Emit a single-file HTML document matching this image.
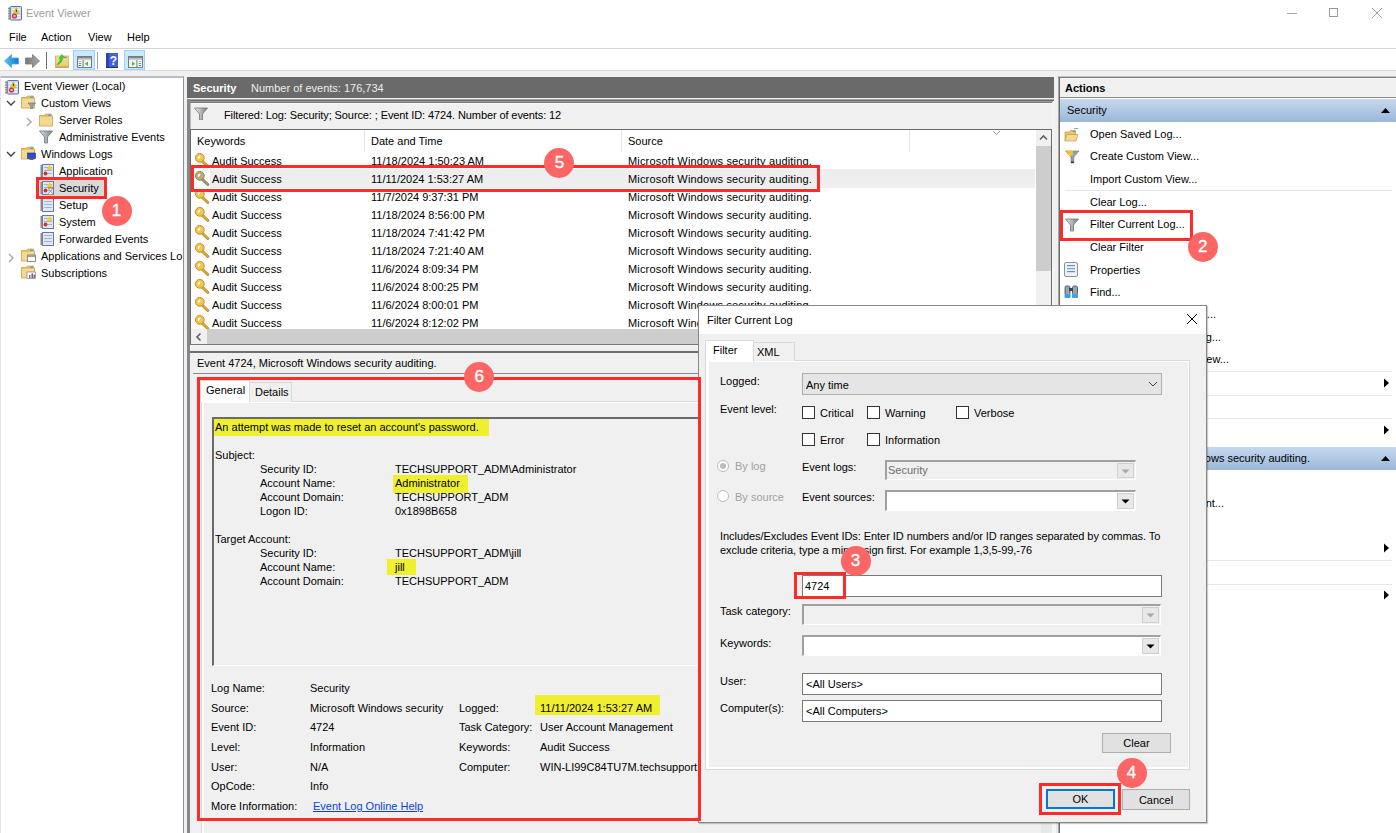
<!DOCTYPE html><html><head><meta charset="utf-8"><title>Event Viewer</title><style>*{margin:0;padding:0}
html,body{width:1396px;height:833px;overflow:hidden;background:#f0f0f0}
body{position:relative;font-family:"Liberation Sans",sans-serif;font-size:11px;color:#000}
.t{position:absolute;white-space:nowrap;line-height:13px;font-size:11px}
.r{position:absolute;display:block}
</style></head><body>
<div class="r" style="left:0px;top:0px;width:1396px;height:833px;background:#f0f0f0"></div>
<div class="r" style="left:0px;top:0px;width:1396px;height:48px;background:#fff"></div>
<svg class="r" style="left:8px;top:6px;" width="14" height="15" viewBox="0 0 14 15"><rect x="2.5" y="0.5" width="11" height="13.5" rx="0.8" fill="#cddcf0" stroke="#5a6fae" stroke-width="1"/><rect x="0.5" y="1" width="2" height="13" fill="#b0b0b0"/><path d="M0 2.5 H2.5 M0 5 H2.5 M0 7.5 H2.5 M0 10 H2.5 M0 12.5 H2.5" stroke="#666" stroke-width="0.6"/><line x1="4" y1="3.5" x2="12.5" y2="3.5" stroke="#f4f7fc"/><line x1="4" y1="6.5" x2="12.5" y2="6.5" stroke="#f4f7fc"/><line x1="4" y1="9.5" x2="12.5" y2="9.5" stroke="#f4f7fc"/><line x1="4" y1="12" x2="12.5" y2="12" stroke="#f4f7fc"/><path d="M8.3 1.8 L11.5 7.5 L5.1 7.5 Z" fill="#f0d21c" stroke="#c9a600" stroke-width="0.5"/><rect x="7.9" y="3.6" width="0.9" height="2.6" fill="#222"/><circle cx="6.5" cy="10" r="2.6" fill="#d8353a"/><path d="M5.5 9 L7.5 11 M7.5 9 L5.5 11" stroke="#fff" stroke-width="0.8"/></svg>
<div class="t" style="left:26px;top:7px;color:#9c9c9c;">Event Viewer</div>
<div class="r" style="left:1287px;top:13px;width:10px;height:1px;background:#a8a8a8"></div>
<div class="r" style="left:1329px;top:8px;width:9px;height:9px;border:1px solid #9a9a9a;box-sizing:border-box"></div>
<svg class="r" style="left:1371px;top:7px;" width="12" height="12" viewBox="0 0 12 12"><path d="M1 1 L11 11 M11 1 L1 11" stroke="#a0a0a0" stroke-width="1"/></svg>
<div class="t" style="left:9px;top:31px;">File</div>
<div class="t" style="left:41px;top:31px;">Action</div>
<div class="t" style="left:88px;top:31px;">View</div>
<div class="t" style="left:127px;top:31px;">Help</div>
<div class="r" style="left:0px;top:48px;width:1396px;height:1px;background:#d5d5d5"></div>
<div class="r" style="left:0px;top:49px;width:1396px;height:21px;background:#fff"></div>
<div class="r" style="left:0px;top:70px;width:1396px;height:1px;background:#dcdcdc"></div>
<svg class="r" style="left:3px;top:53px;" width="17" height="16" viewBox="0 0 17 16"><defs><linearGradient id="gb" x1="0" y1="0" x2="1" y2="0"><stop offset="0" stop-color="#5cc3f7"/><stop offset="1" stop-color="#0a79d6"/></linearGradient></defs><path d="M1.5 8 L8.5 1.5 L8.5 5 L15.5 5 L15.5 11 L8.5 11 L8.5 14.5 Z" fill="url(#gb)" stroke="#4aa8e8" stroke-width="0.8"/></svg>
<svg class="r" style="left:24px;top:53px;" width="17" height="16" viewBox="0 0 17 16"><defs><linearGradient id="gg" x1="0" y1="0" x2="1" y2="0"><stop offset="0" stop-color="#7a7a7a"/><stop offset="1" stop-color="#a8a8a8"/></linearGradient></defs><path d="M15.5 8 L8.5 1.5 L8.5 5 L1.5 5 L1.5 11 L8.5 11 L8.5 14.5 Z" fill="url(#gg)" stroke="#777" stroke-width="0.8"/></svg>
<div class="r" style="left:46px;top:52px;width:1px;height:17px;background:#6a6a6a"></div>
<svg class="r" style="left:55px;top:54px;" width="14" height="14" viewBox="0 0 14 14"><defs><linearGradient id="fy" x1="0" y1="0" x2="0" y2="1"><stop offset="0" stop-color="#f6dc8e"/><stop offset="1" stop-color="#e9c870"/></linearGradient></defs><rect x="0.5" y="2" width="13" height="11.5" fill="url(#fy)" stroke="#d2b060" stroke-width="0.8"/><rect x="0.5" y="12.5" width="13" height="1" fill="#b89848"/><ellipse cx="10.5" cy="3.3" rx="1.6" ry="0.9" fill="#5a9ee0"/><path d="M2 10.5 C3.5 9 5 7 5.5 4.5 L4 4.5 L6.8 0.5 L9.5 3.5 L7.8 3.8 C7.5 7 5.5 9.5 2.5 11 Z" fill="#3ecf3a" stroke="#2aa826" stroke-width="0.5"/></svg>
<div class="r" style="left:73px;top:50px;width:22px;height:20px;background:#cce8ff;border:1px solid #99d1ff;box-sizing:border-box"></div>
<svg class="r" style="left:77px;top:56px;" width="15" height="12" viewBox="0 0 15 12"><rect x="0.5" y="0.5" width="14" height="11" fill="#f4f4f4" stroke="#7a7a7a"/><rect x="1" y="1" width="13" height="1.6" fill="#7f8590"/><rect x="1" y="2.6" width="13" height="1.4" fill="#c9ced6"/><rect x="1" y="4" width="4.5" height="7" fill="#fff"/><rect x="5.5" y="4" width="1.2" height="7.5" fill="#8a8a8a"/><rect x="1.8" y="5" width="2.5" height="1" fill="#9ab4d8"/><rect x="1.8" y="7" width="2.5" height="1" fill="#6f96cc"/><rect x="1.8" y="9" width="2.5" height="1" fill="#3f74c0"/><path d="M11 5.5 L7.8 7.8 L11 10 Z" fill="#3fbf3a"/></svg>
<div class="r" style="left:97px;top:52px;width:1px;height:17px;background:#a0a0a0"></div>
<svg class="r" style="left:106px;top:53px;" width="12" height="15" viewBox="0 0 12 15"><rect x="0" y="0" width="12" height="15" fill="#3f63d8"/><rect x="0" y="0" width="3" height="15" fill="#2a45b0"/><rect x="0" y="14" width="12" height="1" fill="#1c2f80"/><text x="7.3" y="12" font-family="Liberation Sans" font-size="12" font-weight="bold" fill="#fff" text-anchor="middle">?</text></svg>
<div class="r" style="left:124px;top:50px;width:21px;height:20px;background:#cce8ff;border:1px solid #99d1ff;box-sizing:border-box"></div>
<svg class="r" style="left:128px;top:56px;" width="15" height="12" viewBox="0 0 15 12"><rect x="0.5" y="0.5" width="14" height="11" fill="#f4f4f4" stroke="#7a7a7a"/><rect x="1" y="1" width="13" height="1.6" fill="#7f8590"/><rect x="1" y="2.6" width="13" height="1.4" fill="#c9ced6"/><rect x="9.5" y="4" width="4.5" height="7" fill="#fff"/><rect x="8.3" y="4" width="1.2" height="7.5" fill="#8a8a8a"/><rect x="10.7" y="5" width="2.5" height="1" fill="#9ab4d8"/><rect x="10.7" y="7" width="2.5" height="1" fill="#6f96cc"/><rect x="10.7" y="9" width="2.5" height="1" fill="#3f74c0"/><path d="M4 5.5 L7.2 7.8 L4 10 Z" fill="#3fbf3a"/></svg>
<div class="r" style="left:0px;top:76px;width:184px;height:757px;background:#fff;border-top:2px solid #b9bec6;border-right:1px solid #8c93a0;border-left:1px solid #e3e6ea;box-sizing:border-box"></div>
<svg class="r" style="left:5px;top:80px;" width="14" height="15" viewBox="0 0 14 15"><rect x="2.5" y="0.5" width="11" height="13.5" rx="0.8" fill="#cddcf0" stroke="#5a6fae" stroke-width="1"/><rect x="0.5" y="1" width="2" height="13" fill="#b0b0b0"/><path d="M0 2.5 H2.5 M0 5 H2.5 M0 7.5 H2.5 M0 10 H2.5 M0 12.5 H2.5" stroke="#666" stroke-width="0.6"/><line x1="4" y1="3.5" x2="12.5" y2="3.5" stroke="#f4f7fc"/><line x1="4" y1="6.5" x2="12.5" y2="6.5" stroke="#f4f7fc"/><line x1="4" y1="9.5" x2="12.5" y2="9.5" stroke="#f4f7fc"/><line x1="4" y1="12" x2="12.5" y2="12" stroke="#f4f7fc"/><path d="M8.3 1.8 L11.5 7.5 L5.1 7.5 Z" fill="#f0d21c" stroke="#c9a600" stroke-width="0.5"/><rect x="7.9" y="3.6" width="0.9" height="2.6" fill="#222"/><circle cx="6.5" cy="10" r="2.6" fill="#d8353a"/><path d="M5.5 9 L7.5 11 M7.5 9 L5.5 11" stroke="#fff" stroke-width="0.8"/></svg>
<div class="r" style="left:39px;top:180px;width:66px;height:17px;background:#d9d9d9"></div>
<div class="t" style="left:24px;top:80px;">Event Viewer (Local)</div>
<svg class="r" style="left:6px;top:100px;" width="10" height="6" viewBox="0 0 10 6"><path d="M1 1 L5 5 L9 1" fill="none" stroke="#404040" stroke-width="1.4"/></svg>
<svg class="r" style="left:21px;top:95px;" width="15" height="14" viewBox="0 0 15 14"><path d="M0.5 2.5 L5 2.5 L6.5 1 L12.5 1 L12.5 3.5 L0.5 3.5 Z" fill="#e8c66a" stroke="#c9a24c" stroke-width="0.7"/><rect x="0.5" y="3" width="13" height="10" fill="#f5d98e" stroke="#caa34e" stroke-width="0.8"/><rect x="9" y="1.5" width="3" height="1.5" fill="#5aa0e0"/><path d="M7 8 L14.5 8 L11.8 11 L11.8 14 L9.8 14 L9.8 11 Z" fill="#9aa6b2" stroke="#5e6a76" stroke-width="0.6"/></svg>
<div class="t" style="left:41px;top:97px;">Custom Views</div>
<svg class="r" style="left:26px;top:117px;" width="6" height="10" viewBox="0 0 6 10"><path d="M1 1 L5 5 L1 9" fill="none" stroke="#a6a6a6" stroke-width="1.4"/></svg>
<svg class="r" style="left:39px;top:113px;" width="15" height="14" viewBox="0 0 15 14"><path d="M0.5 2.5 L5 2.5 L6.5 1 L12.5 1 L12.5 3.5 L0.5 3.5 Z" fill="#e8c66a" stroke="#c9a24c" stroke-width="0.7"/><rect x="0.5" y="3" width="13" height="10" fill="#f5d98e" stroke="#caa34e" stroke-width="0.8"/><rect x="9" y="1.5" width="3" height="1.5" fill="#5aa0e0"/></svg>
<div class="t" style="left:59px;top:114px;">Server Roles</div>
<svg class="r" style="left:39px;top:130px;" width="14" height="14" viewBox="0 0 14 14"><defs><linearGradient id="fg39130" x1="0" y1="0" x2="1" y2="0"><stop offset="0" stop-color="#e0e0e0"/><stop offset="1" stop-color="#7a8088"/></linearGradient></defs><path d="M0.5 1 L13.5 1 L8.5 7 L8.5 13 L5.5 13 L5.5 7 Z" fill="url(#fg39130)" stroke="#6f767e" stroke-width="0.8"/></svg>
<div class="t" style="left:59px;top:131px;">Administrative Events</div>
<svg class="r" style="left:6px;top:151px;" width="10" height="6" viewBox="0 0 10 6"><path d="M1 1 L5 5 L9 1" fill="none" stroke="#404040" stroke-width="1.4"/></svg>
<svg class="r" style="left:21px;top:146px;" width="15" height="14" viewBox="0 0 15 14"><path d="M0.5 2.5 L5 2.5 L6.5 1 L12.5 1 L12.5 3.5 L0.5 3.5 Z" fill="#e8c66a" stroke="#c9a24c" stroke-width="0.7"/><rect x="0.5" y="3" width="13" height="10" fill="#f5d98e" stroke="#caa34e" stroke-width="0.8"/><rect x="9" y="1.5" width="3" height="1.5" fill="#5aa0e0"/><rect x="6.5" y="7" width="8" height="5.5" fill="#2c4fd0" stroke="#1a2f80" stroke-width="0.6"/><rect x="8.5" y="12.5" width="4" height="1.5" fill="#666"/></svg>
<div class="t" style="left:41px;top:148px;">Windows Logs</div>
<svg class="r" style="left:40px;top:164px;" width="14" height="14" viewBox="0 0 14 14"><rect x="2.5" y="0.5" width="11" height="13" fill="#dfe7f3" stroke="#6577ad" stroke-width="1"/><rect x="0.5" y="1" width="2" height="12" fill="#8a8a8a"/><line x1="4" y1="3.5" x2="12" y2="3.5" stroke="#9fb3d6"/><line x1="4" y1="6.5" x2="12" y2="6.5" stroke="#9fb3d6"/><line x1="4" y1="9.5" x2="12" y2="9.5" stroke="#9fb3d6"/><path d="M9.5 1 L12.5 6 L6.5 6 Z" fill="#f0d020"/><circle cx="5.5" cy="9.5" r="1.9" fill="#d03030"/></svg>
<div class="t" style="left:59px;top:165px;">Application</div>
<svg class="r" style="left:40px;top:181px;" width="14" height="14" viewBox="0 0 14 14"><rect x="2.5" y="0.5" width="11" height="13" fill="#dfe7f3" stroke="#6577ad" stroke-width="1"/><rect x="0.5" y="1" width="2" height="12" fill="#8a8a8a"/><line x1="4" y1="3.5" x2="12" y2="3.5" stroke="#9fb3d6"/><line x1="4" y1="6.5" x2="12" y2="6.5" stroke="#9fb3d6"/><line x1="4" y1="9.5" x2="12" y2="9.5" stroke="#9fb3d6"/><path d="M9.5 1 L12.5 6 L6.5 6 Z" fill="#f0d020"/><circle cx="5.5" cy="9.5" r="1.9" fill="#d03030"/><path d="M8 7 L13 7 L10.5 10 L13 13.5 L8 13.5 L10.5 10 Z" fill="#fff" stroke="#6a8fc0" stroke-width="0.8"/><rect x="8" y="6" width="5" height="1.5" fill="#d8892a"/><rect x="8" y="13" width="5" height="1" fill="#d8892a"/></svg>
<div class="t" style="left:59px;top:182px;">Security</div>
<svg class="r" style="left:40px;top:198px;" width="14" height="14" viewBox="0 0 14 14"><rect x="2.5" y="0.5" width="11" height="13" fill="#dfe7f3" stroke="#6577ad" stroke-width="1"/><rect x="0.5" y="1" width="2" height="12" fill="#8a8a8a"/><line x1="4" y1="3.5" x2="12" y2="3.5" stroke="#9fb3d6"/><line x1="4" y1="6.5" x2="12" y2="6.5" stroke="#9fb3d6"/><line x1="4" y1="9.5" x2="12" y2="9.5" stroke="#9fb3d6"/></svg>
<div class="t" style="left:59px;top:199px;">Setup</div>
<svg class="r" style="left:40px;top:215px;" width="14" height="14" viewBox="0 0 14 14"><rect x="2.5" y="0.5" width="11" height="13" fill="#dfe7f3" stroke="#6577ad" stroke-width="1"/><rect x="0.5" y="1" width="2" height="12" fill="#8a8a8a"/><line x1="4" y1="3.5" x2="12" y2="3.5" stroke="#9fb3d6"/><line x1="4" y1="6.5" x2="12" y2="6.5" stroke="#9fb3d6"/><line x1="4" y1="9.5" x2="12" y2="9.5" stroke="#9fb3d6"/><path d="M9.5 1 L12.5 6 L6.5 6 Z" fill="#f0d020"/><circle cx="5.5" cy="9.5" r="1.9" fill="#d03030"/></svg>
<div class="t" style="left:59px;top:216px;">System</div>
<svg class="r" style="left:40px;top:232px;" width="14" height="14" viewBox="0 0 14 14"><rect x="2.5" y="0.5" width="11" height="13" fill="#dfe7f3" stroke="#6577ad" stroke-width="1"/><rect x="0.5" y="1" width="2" height="12" fill="#8a8a8a"/><line x1="4" y1="3.5" x2="12" y2="3.5" stroke="#9fb3d6"/><line x1="4" y1="6.5" x2="12" y2="6.5" stroke="#9fb3d6"/><line x1="4" y1="9.5" x2="12" y2="9.5" stroke="#9fb3d6"/></svg>
<div class="t" style="left:59px;top:233px;">Forwarded Events</div>
<svg class="r" style="left:8px;top:253px;" width="6" height="10" viewBox="0 0 6 10"><path d="M1 1 L5 5 L1 9" fill="none" stroke="#a6a6a6" stroke-width="1.4"/></svg>
<svg class="r" style="left:21px;top:248px;" width="15" height="14" viewBox="0 0 15 14"><path d="M0.5 2.5 L5 2.5 L6.5 1 L12.5 1 L12.5 3.5 L0.5 3.5 Z" fill="#e8c66a" stroke="#c9a24c" stroke-width="0.7"/><rect x="0.5" y="3" width="13" height="10" fill="#f5d98e" stroke="#caa34e" stroke-width="0.8"/><rect x="9" y="1.5" width="3" height="1.5" fill="#5aa0e0"/><rect x="6.5" y="7" width="8" height="6.5" fill="#fff" stroke="#707070" stroke-width="0.8"/><rect x="6.5" y="7" width="8" height="2" fill="#a0a0a0"/></svg>
<div class="t" style="left:41px;top:250px;">Applications and Services Lo</div>
<svg class="r" style="left:21px;top:265px;" width="15" height="14" viewBox="0 0 15 14"><path d="M0.5 2.5 L5 2.5 L6.5 1 L12.5 1 L12.5 3.5 L0.5 3.5 Z" fill="#e8c66a" stroke="#c9a24c" stroke-width="0.7"/><rect x="0.5" y="3" width="13" height="10" fill="#f5d98e" stroke="#caa34e" stroke-width="0.8"/><rect x="9" y="1.5" width="3" height="1.5" fill="#5aa0e0"/><rect x="6" y="7" width="8.5" height="6.5" fill="#fff" stroke="#707070" stroke-width="0.6"/><rect x="8" y="10" width="1.5" height="3" fill="#3b7fd0"/><rect x="10.5" y="8.5" width="1.5" height="4.5" fill="#d03b3b"/><rect x="12.5" y="9.5" width="1.5" height="3.5" fill="#3b7fd0"/></svg>
<div class="t" style="left:41px;top:267px;">Subscriptions</div>
<div class="r" style="left:187px;top:77px;width:867px;height:21px;background:#6a6a6a"></div>
<div class="t" style="left:193px;top:82px;color:#fff;font-weight:bold;">Security</div>
<div class="t" style="left:251px;top:82px;color:#ededed;">Number of events: 176,734</div>
<div class="r" style="left:187px;top:99px;width:867px;height:247px;background:#f3f3f3"></div>
<div class="r" style="left:187px;top:99px;width:867px;height:1px;background:#a4a4a4"></div>
<div class="r" style="left:187px;top:100px;width:867px;height:1px;background:#6a6a6a"></div>
<div class="r" style="left:187px;top:101px;width:866px;height:1px;background:#9a9a9a"></div>
<div class="r" style="left:187px;top:102px;width:865px;height:1px;background:#7c7c7c"></div>
<div class="r" style="left:187px;top:99px;width:3px;height:734px;background:#878787"></div>
<div class="r" style="left:190px;top:103px;width:862px;height:26px;background:#f0f0f0"></div>
<div class="r" style="left:190px;top:103px;width:862px;height:1px;background:#f8f8f8"></div>
<div class="r" style="left:190px;top:103px;width:1px;height:26px;background:#bdbdbd"></div>
<svg class="r" style="left:194px;top:107px;" width="15" height="13" viewBox="0 0 15 13"><defs><linearGradient id="fg194107" x1="0" y1="0" x2="1" y2="0"><stop offset="0" stop-color="#f4f4f4"/><stop offset="1" stop-color="#777"/></linearGradient></defs><path d="M0.5 1 L13.5 1 L8.5 7 L8.5 13 L5.5 13 L5.5 7 Z" fill="url(#fg194107)" stroke="#6f767e" stroke-width="0.8"/></svg>
<div class="t" style="left:224px;top:109px;letter-spacing:-0.1px;">Filtered: Log: Security; Source: ; Event ID: 4724. Number of events: 12</div>
<div class="r" style="left:190px;top:129px;width:862px;height:1px;background:#6a6a6a"></div>
<div class="r" style="left:190px;top:130px;width:861px;height:214px;background:#fff"></div>
<div class="r" style="left:190px;top:130px;width:1px;height:214px;background:#6a6a6a"></div>
<div class="t" style="left:197px;top:135px;">Keywords</div>
<div class="t" style="left:371px;top:135px;">Date and Time</div>
<div class="t" style="left:628px;top:135px;">Source</div>
<div class="r" style="left:364px;top:130px;width:1px;height:22px;background:#e5e5e5"></div>
<div class="r" style="left:621px;top:130px;width:1px;height:22px;background:#e5e5e5"></div>
<div class="r" style="left:909px;top:130px;width:1px;height:22px;background:#e5e5e5"></div>
<svg class="r" style="left:992px;top:130px;" width="9" height="6" viewBox="0 0 9 6"><path d="M1 1 L4.5 4.5 L8 1" fill="none" stroke="#9a9a9a" stroke-width="1"/></svg>
<div class="r" style="left:1036px;top:130px;width:15px;height:199px;background:#f0f0f0"></div>
<div class="r" style="left:1036px;top:146px;width:15px;height:125px;background:#cdcdcd"></div>
<svg class="r" style="left:1039px;top:134px;" width="9" height="7" viewBox="0 0 9 7"><path d="M1 5.5 L4.5 2 L8 5.5" fill="none" stroke="#606060" stroke-width="1.6"/></svg>
<div class="r" style="left:1051px;top:129px;width:1px;height:216px;background:#6a6a6a"></div>
<div class="r" style="left:210px;top:169px;width:825px;height:19px;background:#eeeeee"></div>
<svg class="r" style="left:194px;top:152px;" width="16" height="16" viewBox="0 0 16 16"><line x1="7.5" y1="8.5" x2="13.8" y2="14.5" stroke="#c48d2a" stroke-width="3" stroke-linecap="round"/><line x1="7.5" y1="8.5" x2="13.8" y2="14.5" stroke="#dca63a" stroke-width="1.6" stroke-linecap="round"/><circle cx="5.8" cy="5.8" r="4.4" fill="#f3c649" stroke="#c48d2a" stroke-width="1"/><ellipse cx="5" cy="5.2" rx="1" ry="1.9" transform="rotate(35 5 5.2)" fill="#fff"/></svg>
<div class="t" style="left:212px;top:155px;">Audit Success</div>
<div class="t" style="left:371px;top:155px;">11/18/2024 1:50:23 AM</div>
<div class="t" style="left:628px;top:155px;letter-spacing:0.17px;">Microsoft Windows security auditing.</div>
<svg class="r" style="left:194px;top:170px;" width="16" height="16" viewBox="0 0 16 16"><line x1="7.5" y1="8.5" x2="13.8" y2="14.5" stroke="#8c8450" stroke-width="3" stroke-linecap="round"/><line x1="7.5" y1="8.5" x2="13.8" y2="14.5" stroke="#a39a62" stroke-width="1.6" stroke-linecap="round"/><circle cx="5.8" cy="5.8" r="4.4" fill="#b8ad72" stroke="#8c8450" stroke-width="1"/><ellipse cx="5" cy="5.2" rx="1" ry="1.9" transform="rotate(35 5 5.2)" fill="#fff"/></svg>
<div class="t" style="left:212px;top:173px;">Audit Success</div>
<div class="t" style="left:371px;top:173px;">11/11/2024 1:53:27 AM</div>
<div class="t" style="left:628px;top:173px;letter-spacing:0.17px;">Microsoft Windows security auditing.</div>
<svg class="r" style="left:194px;top:188px;" width="16" height="16" viewBox="0 0 16 16"><line x1="7.5" y1="8.5" x2="13.8" y2="14.5" stroke="#c48d2a" stroke-width="3" stroke-linecap="round"/><line x1="7.5" y1="8.5" x2="13.8" y2="14.5" stroke="#dca63a" stroke-width="1.6" stroke-linecap="round"/><circle cx="5.8" cy="5.8" r="4.4" fill="#f3c649" stroke="#c48d2a" stroke-width="1"/><ellipse cx="5" cy="5.2" rx="1" ry="1.9" transform="rotate(35 5 5.2)" fill="#fff"/></svg>
<div class="t" style="left:212px;top:191px;">Audit Success</div>
<div class="t" style="left:371px;top:191px;">11/7/2024 9:37:31 PM</div>
<div class="t" style="left:628px;top:191px;letter-spacing:0.17px;">Microsoft Windows security auditing.</div>
<svg class="r" style="left:194px;top:206px;" width="16" height="16" viewBox="0 0 16 16"><line x1="7.5" y1="8.5" x2="13.8" y2="14.5" stroke="#c48d2a" stroke-width="3" stroke-linecap="round"/><line x1="7.5" y1="8.5" x2="13.8" y2="14.5" stroke="#dca63a" stroke-width="1.6" stroke-linecap="round"/><circle cx="5.8" cy="5.8" r="4.4" fill="#f3c649" stroke="#c48d2a" stroke-width="1"/><ellipse cx="5" cy="5.2" rx="1" ry="1.9" transform="rotate(35 5 5.2)" fill="#fff"/></svg>
<div class="t" style="left:212px;top:209px;">Audit Success</div>
<div class="t" style="left:371px;top:209px;">11/18/2024 8:56:00 PM</div>
<div class="t" style="left:628px;top:209px;letter-spacing:0.17px;">Microsoft Windows security auditing.</div>
<svg class="r" style="left:194px;top:224px;" width="16" height="16" viewBox="0 0 16 16"><line x1="7.5" y1="8.5" x2="13.8" y2="14.5" stroke="#c48d2a" stroke-width="3" stroke-linecap="round"/><line x1="7.5" y1="8.5" x2="13.8" y2="14.5" stroke="#dca63a" stroke-width="1.6" stroke-linecap="round"/><circle cx="5.8" cy="5.8" r="4.4" fill="#f3c649" stroke="#c48d2a" stroke-width="1"/><ellipse cx="5" cy="5.2" rx="1" ry="1.9" transform="rotate(35 5 5.2)" fill="#fff"/></svg>
<div class="t" style="left:212px;top:227px;">Audit Success</div>
<div class="t" style="left:371px;top:227px;">11/18/2024 7:41:42 PM</div>
<div class="t" style="left:628px;top:227px;letter-spacing:0.17px;">Microsoft Windows security auditing.</div>
<svg class="r" style="left:194px;top:242px;" width="16" height="16" viewBox="0 0 16 16"><line x1="7.5" y1="8.5" x2="13.8" y2="14.5" stroke="#c48d2a" stroke-width="3" stroke-linecap="round"/><line x1="7.5" y1="8.5" x2="13.8" y2="14.5" stroke="#dca63a" stroke-width="1.6" stroke-linecap="round"/><circle cx="5.8" cy="5.8" r="4.4" fill="#f3c649" stroke="#c48d2a" stroke-width="1"/><ellipse cx="5" cy="5.2" rx="1" ry="1.9" transform="rotate(35 5 5.2)" fill="#fff"/></svg>
<div class="t" style="left:212px;top:245px;">Audit Success</div>
<div class="t" style="left:371px;top:245px;">11/18/2024 7:21:40 AM</div>
<div class="t" style="left:628px;top:245px;letter-spacing:0.17px;">Microsoft Windows security auditing.</div>
<svg class="r" style="left:194px;top:260px;" width="16" height="16" viewBox="0 0 16 16"><line x1="7.5" y1="8.5" x2="13.8" y2="14.5" stroke="#c48d2a" stroke-width="3" stroke-linecap="round"/><line x1="7.5" y1="8.5" x2="13.8" y2="14.5" stroke="#dca63a" stroke-width="1.6" stroke-linecap="round"/><circle cx="5.8" cy="5.8" r="4.4" fill="#f3c649" stroke="#c48d2a" stroke-width="1"/><ellipse cx="5" cy="5.2" rx="1" ry="1.9" transform="rotate(35 5 5.2)" fill="#fff"/></svg>
<div class="t" style="left:212px;top:263px;">Audit Success</div>
<div class="t" style="left:371px;top:263px;">11/6/2024 8:09:34 PM</div>
<div class="t" style="left:628px;top:263px;letter-spacing:0.17px;">Microsoft Windows security auditing.</div>
<svg class="r" style="left:194px;top:278px;" width="16" height="16" viewBox="0 0 16 16"><line x1="7.5" y1="8.5" x2="13.8" y2="14.5" stroke="#c48d2a" stroke-width="3" stroke-linecap="round"/><line x1="7.5" y1="8.5" x2="13.8" y2="14.5" stroke="#dca63a" stroke-width="1.6" stroke-linecap="round"/><circle cx="5.8" cy="5.8" r="4.4" fill="#f3c649" stroke="#c48d2a" stroke-width="1"/><ellipse cx="5" cy="5.2" rx="1" ry="1.9" transform="rotate(35 5 5.2)" fill="#fff"/></svg>
<div class="t" style="left:212px;top:281px;">Audit Success</div>
<div class="t" style="left:371px;top:281px;">11/6/2024 8:00:25 PM</div>
<div class="t" style="left:628px;top:281px;letter-spacing:0.17px;">Microsoft Windows security auditing.</div>
<svg class="r" style="left:194px;top:296px;" width="16" height="16" viewBox="0 0 16 16"><line x1="7.5" y1="8.5" x2="13.8" y2="14.5" stroke="#c48d2a" stroke-width="3" stroke-linecap="round"/><line x1="7.5" y1="8.5" x2="13.8" y2="14.5" stroke="#dca63a" stroke-width="1.6" stroke-linecap="round"/><circle cx="5.8" cy="5.8" r="4.4" fill="#f3c649" stroke="#c48d2a" stroke-width="1"/><ellipse cx="5" cy="5.2" rx="1" ry="1.9" transform="rotate(35 5 5.2)" fill="#fff"/></svg>
<div class="t" style="left:212px;top:299px;">Audit Success</div>
<div class="t" style="left:371px;top:299px;">11/6/2024 8:00:01 PM</div>
<div class="t" style="left:628px;top:299px;letter-spacing:0.17px;">Microsoft Windows security auditing.</div>
<svg class="r" style="left:194px;top:314px;" width="16" height="16" viewBox="0 0 16 16"><line x1="7.5" y1="8.5" x2="13.8" y2="14.5" stroke="#c48d2a" stroke-width="3" stroke-linecap="round"/><line x1="7.5" y1="8.5" x2="13.8" y2="14.5" stroke="#dca63a" stroke-width="1.6" stroke-linecap="round"/><circle cx="5.8" cy="5.8" r="4.4" fill="#f3c649" stroke="#c48d2a" stroke-width="1"/><ellipse cx="5" cy="5.2" rx="1" ry="1.9" transform="rotate(35 5 5.2)" fill="#fff"/></svg>
<div class="t" style="left:212px;top:317px;">Audit Success</div>
<div class="t" style="left:371px;top:317px;">11/6/2024 8:12:02 PM</div>
<div class="t" style="left:628px;top:317px;letter-spacing:0.17px;">Microsoft Windows security auditing.</div>
<div class="r" style="left:191px;top:329px;width:845px;height:15px;background:#f0f0f0"></div>
<div class="r" style="left:207px;top:329px;width:829px;height:15px;background:#cdcdcd"></div>
<svg class="r" style="left:195px;top:332px;" width="8" height="10" viewBox="0 0 8 10"><path d="M5.5 1.5 L2 5 L5.5 8.5" fill="none" stroke="#606060" stroke-width="1.6"/></svg>
<div class="r" style="left:190px;top:344px;width:862px;height:1px;background:#777"></div>
<div class="r" style="left:190px;top:351px;width:864px;height:2px;background:#6e6e6e"></div>
<div class="t" style="left:197px;top:357px;">Event 4724, Microsoft Windows security auditing.</div>
<div class="r" style="left:193px;top:373px;width:858px;height:1px;background:#8a8a8a"></div>
<div class="r" style="left:201px;top:401px;width:850px;height:432px;background:#f0f0f0;border-left:1px solid #dcdcdc;border-top:1px solid #dcdcdc"></div>
<div class="r" style="left:202px;top:402px;width:849px;height:431px;border-left:2px solid #fff;border-top:1px solid #fff;box-sizing:border-box"></div>
<div class="r" style="left:249px;top:382px;width:43px;height:20px;background:#f0f0f0;border:1px solid #d9d9d9;border-bottom:none;box-sizing:border-box"></div>
<div class="r" style="left:200px;top:380px;width:50px;height:22px;background:#fff;border:1px solid #d9d9d9;border-bottom:none;box-sizing:border-box"></div>
<div class="t" style="left:206px;top:384px;">General</div>
<div class="t" style="left:255px;top:386px;">Details</div>
<div class="r" style="left:212px;top:417px;width:500px;height:249px;background:#f0f0f0;border-top:2px solid #6a6a6a;border-left:2px solid #6a6a6a;border-bottom:1px solid #fff;box-sizing:border-box"></div>
<div class="r" style="left:214px;top:419px;width:275px;height:17px;background:#efef2f"></div>
<div class="r" style="left:393px;top:475px;width:75px;height:18px;background:#efef2f"></div>
<div class="r" style="left:387px;top:559px;width:29px;height:16px;background:#efef2f"></div>
<div class="r" style="left:535px;top:695px;width:125px;height:20px;background:#efef2f"></div>
<div class="t" style="left:215px;top:421px;">An attempt was made to reset an account's password.</div>
<div class="t" style="left:215px;top:449px;">Subject:</div>
<div class="t" style="left:260px;top:463px;">Security ID:</div>
<div class="t" style="left:395px;top:463px;">TECHSUPPORT_ADM\Administrator</div>
<div class="t" style="left:260px;top:477px;">Account Name:</div>
<div class="t" style="left:395px;top:477px;">Administrator</div>
<div class="t" style="left:260px;top:491px;">Account Domain:</div>
<div class="t" style="left:395px;top:491px;">TECHSUPPORT_ADM</div>
<div class="t" style="left:260px;top:505px;">Logon ID:</div>
<div class="t" style="left:395px;top:505px;">0x1898B658</div>
<div class="t" style="left:215px;top:533px;">Target Account:</div>
<div class="t" style="left:260px;top:547px;">Security ID:</div>
<div class="t" style="left:395px;top:547px;">TECHSUPPORT_ADM\jill</div>
<div class="t" style="left:260px;top:561px;">Account Name:</div>
<div class="t" style="left:395px;top:561px;">jill</div>
<div class="t" style="left:260px;top:575px;">Account Domain:</div>
<div class="t" style="left:395px;top:575px;">TECHSUPPORT_ADM</div>
<div class="t" style="left:211px;top:682px;">Log Name:</div>
<div class="t" style="left:310px;top:682px;">Security</div>
<div class="t" style="left:211px;top:702px;">Source:</div>
<div class="t" style="left:310px;top:702px;">Microsoft Windows security</div>
<div class="t" style="left:211px;top:721px;">Event ID:</div>
<div class="t" style="left:310px;top:721px;">4724</div>
<div class="t" style="left:211px;top:741px;">Level:</div>
<div class="t" style="left:310px;top:741px;">Information</div>
<div class="t" style="left:211px;top:761px;">User:</div>
<div class="t" style="left:310px;top:761px;">N/A</div>
<div class="t" style="left:211px;top:780px;">OpCode:</div>
<div class="t" style="left:310px;top:780px;">Info</div>
<div class="t" style="left:211px;top:800px;">More Information:</div>
<div class="t" style="left:313px;top:800px;color:#0b3fe0;text-decoration:underline">Event Log Online Help</div>
<div class="t" style="left:459px;top:702px;">Logged:</div>
<div class="t" style="left:540px;top:702px;">11/11/2024 1:53:27 AM</div>
<div class="t" style="left:459px;top:721px;">Task Category:</div>
<div class="t" style="left:540px;top:721px;">User Account Management</div>
<div class="t" style="left:459px;top:741px;">Keywords:</div>
<div class="t" style="left:540px;top:741px;">Audit Success</div>
<div class="t" style="left:459px;top:761px;">Computer:</div>
<div class="t" style="left:540px;top:761px;">WIN-LI99C84TU7M.techsupport.local</div>
<div class="r" style="left:1058px;top:77px;width:338px;height:756px;background:#fff"></div>
<div class="r" style="left:1058px;top:77px;width:1px;height:756px;background:#a8a8a8"></div>
<div class="r" style="left:1059px;top:77px;width:1px;height:756px;background:#6a6a6a"></div>
<div class="r" style="left:1058px;top:76px;width:338px;height:1px;background:#c4c4c4"></div>
<div class="r" style="left:1058px;top:77px;width:338px;height:1px;background:#7a7a7a"></div>
<div class="r" style="left:1060px;top:78px;width:336px;height:1px;background:#f8f8f8"></div>
<div class="r" style="left:1060px;top:79px;width:336px;height:18px;background:#f0f0f0"></div>
<div class="t" style="left:1065px;top:82px;font-weight:bold;">Actions</div>
<div class="r" style="left:1060px;top:97px;width:336px;height:1px;background:#8a8a8a"></div>
<div class="r" style="left:1060px;top:99px;width:336px;height:23px;background:linear-gradient(#c6d9ee,#9ab7d9)"></div>
<div class="t" style="left:1067px;top:104px;">Security</div>
<svg class="r" style="left:1380px;top:107px;" width="11" height="7" viewBox="0 0 11 7"><path d="M1 6 L5.5 1 L10 6 Z" fill="#000"/></svg>
<div class="t" style="left:1090px;top:128px;">Open Saved Log...</div>
<div class="t" style="left:1090px;top:150px;">Create Custom View...</div>
<div class="t" style="left:1090px;top:173px;">Import Custom View...</div>
<div class="t" style="left:1090px;top:196px;">Clear Log...</div>
<div class="t" style="left:1090px;top:218px;">Filter Current Log...</div>
<div class="t" style="left:1090px;top:241px;">Clear Filter</div>
<div class="t" style="left:1090px;top:264px;">Properties</div>
<div class="t" style="left:1090px;top:286px;">Find...</div>
<div class="r" style="left:1065px;top:190px;width:327px;height:1px;background:#e8e8e8"></div>
<div class="t" style="left:0px;top:308px;left:auto;right:180px;">Save Filtered Log File As...</div>
<div class="t" style="left:0px;top:331px;left:auto;right:175px;">Attach a Task To this Log...</div>
<div class="t" style="left:0px;top:353px;left:auto;right:167px;">Save Filter to Custom View...</div>
<div class="r" style="left:1065px;top:371px;width:327px;height:1px;background:#e8e8e8"></div>
<svg class="r" style="left:1383px;top:378px;" width="7" height="10" viewBox="0 0 7 10"><path d="M1 0.5 L6 5 L1 9.5 Z" fill="#000"/></svg>
<div class="t" style="left:1090px;top:377px;">View</div>
<div class="r" style="left:1065px;top:395px;width:327px;height:1px;background:#e8e8e8"></div>
<div class="t" style="left:1090px;top:400px;">Refresh</div>
<div class="r" style="left:1065px;top:418px;width:327px;height:1px;background:#e8e8e8"></div>
<svg class="r" style="left:1383px;top:425px;" width="7" height="10" viewBox="0 0 7 10"><path d="M1 0.5 L6 5 L1 9.5 Z" fill="#000"/></svg>
<div class="t" style="left:1090px;top:424px;">Help</div>
<div class="r" style="left:1060px;top:447px;width:336px;height:23px;background:linear-gradient(#c6d9ee,#9ab7d9)"></div>
<div class="t" style="left:0px;top:452px;left:auto;right:86px;">Event 4724, Microsoft Windows security auditing.</div>
<svg class="r" style="left:1380px;top:455px;" width="11" height="7" viewBox="0 0 11 7"><path d="M1 6 L5.5 1 L10 6 Z" fill="#000"/></svg>
<div class="t" style="left:1090px;top:474px;">Event Properties</div>
<div class="t" style="left:0px;top:497px;left:auto;right:172px;">Attach Task To This Event...</div>
<div class="t" style="left:1090px;top:520px;">Save Selected Events...</div>
<svg class="r" style="left:1383px;top:543px;" width="7" height="10" viewBox="0 0 7 10"><path d="M1 0.5 L6 5 L1 9.5 Z" fill="#000"/></svg>
<div class="t" style="left:1090px;top:542px;">Copy</div>
<div class="r" style="left:1065px;top:560px;width:327px;height:1px;background:#e8e8e8"></div>
<div class="t" style="left:1090px;top:565px;">Refresh</div>
<div class="r" style="left:1065px;top:584px;width:327px;height:1px;background:#e8e8e8"></div>
<svg class="r" style="left:1383px;top:590px;" width="7" height="10" viewBox="0 0 7 10"><path d="M1 0.5 L6 5 L1 9.5 Z" fill="#000"/></svg>
<div class="t" style="left:1090px;top:589px;">Help</div>
<svg class="r" style="left:1064px;top:128px;" width="15" height="14" viewBox="0 0 15 14"><path d="M1 4 L5 4 L6.5 2.5 L11.5 2.5 L11.5 12.5 L1 12.5 Z" fill="#e9c46c" stroke="#c39a44" stroke-width="0.7"/><path d="M3 6.5 L14 6.5 L12 13 L0.8 13 Z" fill="#f5d892" stroke="#c39a44" stroke-width="0.7"/><ellipse cx="10" cy="3.5" rx="1.3" ry="0.8" fill="#5a9ee0"/><rect x="10" y="0" width="4" height="1" fill="#5ad85a"/></svg>
<svg class="r" style="left:1065px;top:150px;" width="15" height="14" viewBox="0 0 15 14"><path d="M0.5 1 L14 1 L8.8 7 L8.8 13 L6 13 L6 7 Z" fill="#8fa0b4" stroke="#6a7a8c" stroke-width="0.6"/><path d="M0.5 1 L7.5 1 L7.5 6.5 Z" fill="#ffb21a"/><circle cx="5.5" cy="3.2" r="2.6" fill="#ffc21a"/><rect x="6" y="11.5" width="2.8" height="1.5" fill="#333"/></svg>
<svg class="r" style="left:1065px;top:218px;" width="14" height="14" viewBox="0 0 14 14"><defs><linearGradient id="fg1065218" x1="0" y1="0" x2="1" y2="0"><stop offset="0" stop-color="#e6eaee"/><stop offset="1" stop-color="#6f7a86"/></linearGradient></defs><path d="M0.5 1 L13.5 1 L8.5 7 L8.5 13 L5.5 13 L5.5 7 Z" fill="url(#fg1065218)" stroke="#6f767e" stroke-width="0.8"/></svg>
<svg class="r" style="left:1064px;top:262px;" width="14" height="15" viewBox="0 0 14 15"><rect x="0.5" y="0.5" width="13" height="14" rx="1.5" fill="#eef1f5" stroke="#8a94a0"/><rect x="3" y="3" width="8" height="1.2" fill="#7a8aa0"/><rect x="3" y="6" width="8" height="1.2" fill="#45b0e8"/><rect x="3" y="9" width="8" height="1.2" fill="#7a8aa0"/></svg>
<svg class="r" style="left:1064px;top:285px;" width="15" height="14" viewBox="0 0 15 14"><rect x="1" y="1" width="5" height="9" rx="1.5" fill="#9aa4ae" stroke="#3a4450" stroke-width="0.8"/><rect x="8.5" y="1" width="5" height="9" rx="1.5" fill="#9aa4ae" stroke="#3a4450" stroke-width="0.8"/><rect x="5" y="3" width="4" height="3" fill="#3a4450"/><rect x="0.5" y="9" width="6" height="4" rx="1" fill="#3aa0e8"/><rect x="8" y="9" width="6" height="4" rx="1" fill="#3aa0e8"/></svg>
<div class="r" style="left:1041px;top:822px;width:17px;height:11px;background:#e8e8e8"></div>
<div class="r" style="left:1052px;top:822px;width:4px;height:11px;background:#f6f6f6"></div>
<div class="r" style="left:698px;top:305px;width:509px;height:518px;background:#f0f0f0;border:1px solid #888;box-sizing:border-box;box-shadow:1px 1px 1px rgba(0,0,0,0.2)"></div>
<div class="r" style="left:699px;top:306px;width:507px;height:28px;background:#fff"></div>
<div class="t" style="left:707px;top:314px;">Filter Current Log</div>
<svg class="r" style="left:1186px;top:313px;" width="12" height="12" viewBox="0 0 12 12"><path d="M1 1 L11 11 M11 1 L1 11" stroke="#000" stroke-width="1"/></svg>
<div class="r" style="left:705px;top:360px;width:485px;height:410px;background:#f0f0f0;border:1px solid #dadada;box-sizing:border-box"></div>
<div class="r" style="left:706px;top:361px;width:483px;height:408px;border-left:3px solid #fff;border-top:1px solid #fff;border-bottom:2px solid #fff;border-right:1px solid #fff;box-sizing:border-box"></div>
<div class="r" style="left:753px;top:342px;width:42px;height:19px;background:#f0f0f0;border:1px solid #d9d9d9;border-bottom:none;box-sizing:border-box"></div>
<div class="r" style="left:705px;top:340px;width:49px;height:22px;background:#fff;border:1px solid #d9d9d9;border-bottom:none;box-sizing:border-box"></div>
<div class="t" style="left:713px;top:344px;">Filter</div>
<div class="t" style="left:757px;top:346px;">XML</div>
<div class="t" style="left:720px;top:375px;">Logged:</div>
<div class="r" style="left:802px;top:373px;width:360px;height:22px;background:#e5e5e5;border:1px solid #adadad;box-sizing:border-box"></div>
<div class="t" style="left:806px;top:379px;">Any time</div>
<svg class="r" style="left:1148px;top:381px;" width="10" height="6" viewBox="0 0 10 6"><path d="M1 1 L5 5 L9 1" fill="none" stroke="#444" stroke-width="1"/></svg>
<div class="t" style="left:720px;top:403px;">Event level:</div>
<div class="r" style="left:802px;top:406px;width:13px;height:13px;background:#fff;border:1px solid #333;box-sizing:border-box"></div>
<div class="t" style="left:820px;top:407px;">Critical</div>
<div class="r" style="left:867px;top:406px;width:13px;height:13px;background:#fff;border:1px solid #333;box-sizing:border-box"></div>
<div class="t" style="left:885px;top:407px;">Warning</div>
<div class="r" style="left:956px;top:406px;width:13px;height:13px;background:#fff;border:1px solid #333;box-sizing:border-box"></div>
<div class="t" style="left:974px;top:407px;">Verbose</div>
<div class="r" style="left:802px;top:433px;width:13px;height:13px;background:#fff;border:1px solid #333;box-sizing:border-box"></div>
<div class="t" style="left:820px;top:434px;">Error</div>
<div class="r" style="left:867px;top:433px;width:13px;height:13px;background:#fff;border:1px solid #333;box-sizing:border-box"></div>
<div class="t" style="left:885px;top:434px;">Information</div>
<svg class="r" style="left:716px;top:459px;" width="14" height="14" viewBox="0 0 14 14"><circle cx="7" cy="7" r="5.5" fill="#fff" stroke="#bcbcbc" stroke-width="1"/><circle cx="7" cy="7" r="3" fill="#bcbcbc"/></svg>
<div class="t" style="left:735px;top:460px;color:#a0a0a0;">By log</div>
<svg class="r" style="left:716px;top:489px;" width="14" height="14" viewBox="0 0 14 14"><circle cx="7" cy="7" r="5.5" fill="#fff" stroke="#bcbcbc" stroke-width="1"/></svg>
<div class="t" style="left:735px;top:491px;color:#a0a0a0;">By source</div>
<div class="t" style="left:802px;top:461px;">Event logs:</div>
<div class="t" style="left:802px;top:491px;">Event sources:</div>
<div class="r" style="left:885px;top:460px;width:251px;height:20px;background:#f0f0f0;border-top:2px solid #a0a0a0;border-left:2px solid #a0a0a0;border-bottom:1px solid #fff;border-right:1px solid #fff;box-sizing:border-box"></div>
<div class="r" style="left:1117px;top:463px;width:17px;height:15px;background:#e8e8e8;border:1px solid #d0d0d0;box-sizing:border-box"></div>
<svg class="r" style="left:1121px;top:469px;" width="9" height="5" viewBox="0 0 9 5"><path d="M0.5 0.5 L8.5 0.5 L4.5 4.5 Z" fill="#a8a8a8"/></svg>
<div class="t" style="left:888px;top:464px;color:#6d6d6d;">Security</div>
<div class="r" style="left:885px;top:490px;width:251px;height:21px;background:#fff;border-top:2px solid #a0a0a0;border-left:2px solid #a0a0a0;border-bottom:1px solid #fff;border-right:1px solid #fff;box-sizing:border-box"></div>
<div class="r" style="left:1117px;top:493px;width:17px;height:16px;background:#e8e8e8;border:1px solid #d0d0d0;box-sizing:border-box"></div>
<svg class="r" style="left:1121px;top:499px;" width="9" height="5" viewBox="0 0 9 5"><path d="M0.5 0.5 L8.5 0.5 L4.5 4.5 Z" fill="#000"/></svg>
<div class="t" style="left:720px;top:530px;letter-spacing:-0.06px;">Includes/Excludes Event IDs: Enter ID numbers and/or ID ranges separated by commas. To</div>
<div class="t" style="left:720px;top:544px;letter-spacing:-0.06px;">exclude criteria, type a minus sign first. For example 1,3,5-99,-76</div>
<div class="r" style="left:802px;top:575px;width:360px;height:22px;background:#fff;border:1px solid #7a7a7a;box-sizing:border-box"></div>
<div class="t" style="left:805px;top:580px;">4724</div>
<div class="t" style="left:720px;top:605px;">Task category:</div>
<div class="r" style="left:802px;top:604px;width:359px;height:21px;background:#f0f0f0;border-top:2px solid #a0a0a0;border-left:2px solid #a0a0a0;border-bottom:1px solid #fff;border-right:1px solid #fff;box-sizing:border-box"></div>
<div class="r" style="left:1142px;top:607px;width:17px;height:16px;background:#e8e8e8;border:1px solid #d0d0d0;box-sizing:border-box"></div>
<svg class="r" style="left:1146px;top:613px;" width="9" height="5" viewBox="0 0 9 5"><path d="M0.5 0.5 L8.5 0.5 L4.5 4.5 Z" fill="#a8a8a8"/></svg>
<div class="t" style="left:720px;top:637px;">Keywords:</div>
<div class="r" style="left:802px;top:635px;width:359px;height:21px;background:#fff;border-top:2px solid #a0a0a0;border-left:2px solid #a0a0a0;border-bottom:1px solid #fff;border-right:1px solid #fff;box-sizing:border-box"></div>
<div class="r" style="left:1142px;top:638px;width:17px;height:16px;background:#e8e8e8;border:1px solid #d0d0d0;box-sizing:border-box"></div>
<svg class="r" style="left:1146px;top:644px;" width="9" height="5" viewBox="0 0 9 5"><path d="M0.5 0.5 L8.5 0.5 L4.5 4.5 Z" fill="#000"/></svg>
<div class="t" style="left:720px;top:675px;">User:</div>
<div class="r" style="left:802px;top:673px;width:360px;height:22px;background:#fff;border:1px solid #7a7a7a;box-sizing:border-box"></div>
<div class="t" style="left:806px;top:678px;">&lt;All Users&gt;</div>
<div class="t" style="left:720px;top:702px;">Computer(s):</div>
<div class="r" style="left:802px;top:700px;width:360px;height:22px;background:#fff;border:1px solid #7a7a7a;box-sizing:border-box"></div>
<div class="t" style="left:806px;top:705px;">&lt;All Computers&gt;</div>
<div class="r" style="left:1102px;top:733px;width:69px;height:20px;background:#e1e1e1;border:1px solid #adadad;box-sizing:border-box"></div>
<div class="t" style="left:1102px;width:69px;text-align:center;top:737px">Clear</div>
<div class="r" style="left:1046px;top:789px;width:69px;height:20px;background:#e1e1e1;border:2px solid #0078d7;box-sizing:border-box"></div>
<div class="t" style="left:1046px;width:69px;text-align:center;top:793px">OK</div>
<div class="r" style="left:1122px;top:789px;width:68px;height:21px;background:#e1e1e1;border:1px solid #adadad;box-sizing:border-box"></div>
<div class="t" style="left:1122px;width:68px;text-align:center;top:794px">Cancel</div>
<div class="r" style="left:36px;top:177px;width:71px;height:22px;border:3px solid #fe2b2b;box-sizing:border-box"></div>
<div class="r" style="left:101.6px;top:195.6px;width:30px;height:30px;border-radius:50%;background:#fe6565;color:#fff;font-size:17px;-webkit-text-stroke:0.35px #fff;line-height:30px;text-align:center">1</div>
<div class="r" style="left:1060px;top:210px;width:133px;height:31px;border:3px solid #fe2b2b;box-sizing:border-box"></div>
<div class="r" style="left:1187.7px;top:231.7px;width:30px;height:30px;border-radius:50%;background:#fe6565;color:#fff;font-size:17px;-webkit-text-stroke:0.35px #fff;line-height:30px;text-align:center">2</div>
<div class="r" style="left:794px;top:572px;width:52px;height:27px;border:3px solid #fe2b2b;box-sizing:border-box"></div>
<div class="r" style="left:840.6px;top:545.7px;width:30px;height:30px;border-radius:50%;background:#fe6565;color:#fff;font-size:17px;-webkit-text-stroke:0.35px #fff;line-height:30px;text-align:center">3</div>
<div class="r" style="left:1039px;top:783px;width:82px;height:32px;border:3px solid #fe2b2b;box-sizing:border-box"></div>
<div class="r" style="left:1116.5px;top:757.6px;width:30px;height:30px;border-radius:50%;background:#fe6565;color:#fff;font-size:17px;-webkit-text-stroke:0.35px #fff;line-height:30px;text-align:center">4</div>
<div class="r" style="left:191px;top:165px;width:629px;height:27px;border:3px solid #fe2b2b;box-sizing:border-box"></div>
<div class="r" style="left:544.4px;top:147.5px;width:30px;height:30px;border-radius:50%;background:#fe6565;color:#fff;font-size:17px;-webkit-text-stroke:0.35px #fff;line-height:30px;text-align:center">5</div>
<div class="r" style="left:197px;top:377px;width:504px;height:444px;border:3px solid #fe2b2b;box-sizing:border-box"></div>
<div class="r" style="left:464.2px;top:361.8px;width:30px;height:30px;border-radius:50%;background:#fe6565;color:#fff;font-size:17px;-webkit-text-stroke:0.35px #fff;line-height:30px;text-align:center">6</div>
</body></html>
